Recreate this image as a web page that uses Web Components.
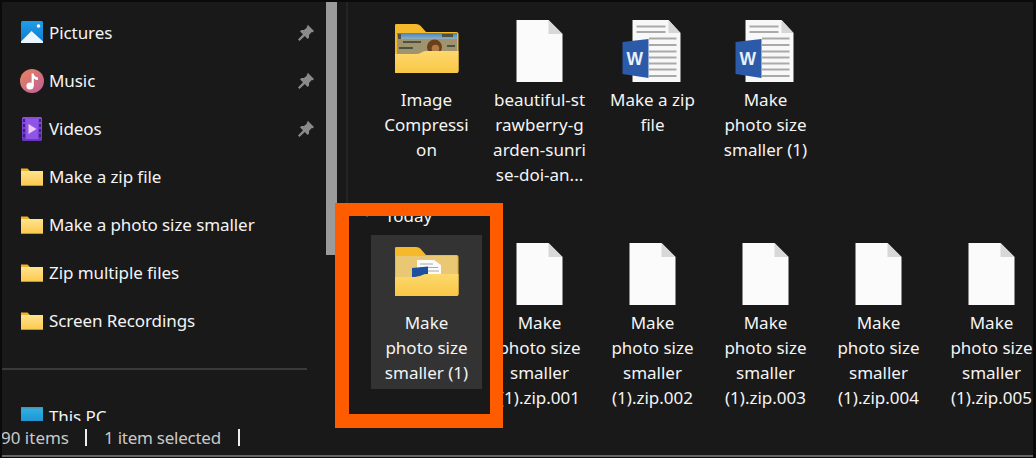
<!DOCTYPE html>
<html><head><meta charset="utf-8"><style>
html,body{margin:0;padding:0;background:#0a0a0a;overflow:hidden}
body{width:1036px;height:458px;font-family:"Noto Sans","Open Sans",sans-serif}
</style></head><body>
<fe-window>
  <nav-row slot="nav" icon="pictures" pinned>Pictures</nav-row>
  <nav-row slot="nav" icon="music" pinned>Music</nav-row>
  <nav-row slot="nav" icon="videos" pinned>Videos</nav-row>
  <nav-row slot="nav" icon="folder">Make a zip file</nav-row>
  <nav-row slot="nav" icon="folder">Make a photo size smaller</nav-row>
  <nav-row slot="nav" icon="folder">Zip multiple files</nav-row>
  <nav-row slot="nav" icon="folder">Screen Recordings</nav-row>
  <nav-sep slot="nav"></nav-sep>
  <nav-row slot="nav" icon="pc">This PC</nav-row>

  <tile-grid slot="main" tall>
    <file-tile icon="lion">Image<br>Compressi<br>on</file-tile>
    <file-tile icon="blank">beautiful-st<br>rawberry-g<br>arden-sunri<br>se-doi-an...</file-tile>
    <file-tile icon="word">Make a zip<br>file</file-tile>
    <file-tile icon="word">Make<br>photo size<br>smaller (1)</file-tile>
  </tile-grid>
  <group-head slot="main">Today</group-head>
  <tile-grid slot="main">
    <file-tile icon="docs" selected>Make<br>photo size<br>smaller (1)</file-tile>
    <file-tile icon="blank">Make<br>photo size<br>smaller<br>(1).zip.001</file-tile>
    <file-tile icon="blank">Make<br>photo size<br>smaller<br>(1).zip.002</file-tile>
    <file-tile icon="blank">Make<br>photo size<br>smaller<br>(1).zip.003</file-tile>
    <file-tile icon="blank">Make<br>photo size<br>smaller<br>(1).zip.004</file-tile>
    <file-tile icon="blank">Make<br>photo size<br>smaller<br>(1).zip.005</file-tile>
  </tile-grid>

  <status-part slot="status" wide>90 items</status-part>
  <status-part slot="status">1 item selected</status-part>
</fe-window>
<script>
const grad=(id,a,b)=>`<linearGradient id="${id}" x1="0" y1="0" x2="0" y2="1"><stop offset="0" stop-color="${a}"/><stop offset="1" stop-color="${b}"/></linearGradient>`;
const backFolder=`<path d="M1.500 4H21Q24 4 25.500 5.800L31 12H61.500Q63.500 12 63.500 14V51Q63.500 53 61.500 53H1.500Q-0.500 53 -0.500 51V6Q-0.500 4 1.500 4Z" fill="#f6b92b"/>`;
const frontFolder=`<path d="M-0.500 34H21Q24 34 26.500 32.400Q29 31 32 31H63.500V51Q63.500 53 61.500 53H1.500Q-0.500 53 -0.500 51Z" fill="url(#f)"/>`;
const ICONS={
 pictures:`<svg width="24" height="24" viewBox="0 0 24 24"><defs>${grad('a','#1f9fe8','#0f78cf')}</defs><rect x="1" y="0" width="22" height="22" rx="1.500" fill="url(#a)"/><circle cx="18.500" cy="5" r="1.800" fill="#fff"/><path d="M1 20.500 11.500 10 23 20.500V22H1Z" fill="#eaf6ff"/></svg>`,
 music:`<svg width="24" height="24" viewBox="0 0 24 24"><defs><linearGradient id="m" x1="0" y1="0" x2="1" y2="1"><stop offset="0" stop-color="#e8845a"/><stop offset="1" stop-color="#bf5f9c"/></linearGradient></defs><circle cx="12" cy="12" r="12" fill="url(#m)"/><circle cx="10" cy="17" r="3.600" fill="#fff"/><path d="M11.600 17V4.500H13.600Q14 8 18 8.600V11Q15.500 11 13.800 9.500V17Z" fill="#fff"/></svg>`,
 videos:`<svg width="24" height="24" viewBox="0 0 24 24"><defs>${grad('v','#8d4fe0','#6a35c2')}</defs><rect x="2" y="0" width="20" height="24" rx="1.500" fill="url(#v)"/><g fill="#3f1f86"><rect x="3" y="2" width="2" height="3"/><rect x="3" y="7" width="2" height="3"/><rect x="3" y="12" width="2" height="3"/><rect x="3" y="17" width="2" height="3"/><rect x="19" y="2" width="2" height="3"/><rect x="19" y="7" width="2" height="3"/><rect x="19" y="12" width="2" height="3"/><rect x="19" y="17" width="2" height="3"/></g><rect x="6" y="2" width="12" height="20" fill="#8f55e6"/><path d="M8.500 7 16.500 12 8.500 17Z" fill="#f0c8f5"/></svg>`,
 folder:`<svg width="24" height="24" viewBox="0 0 24 24"><defs>${grad('n','#ffe48e','#fbc94f')}</defs><path d="M1 3.500H7.500L10 6H23V20.500H1Z" fill="#f2b32a"/><path d="M1 6H23V20.500H1Z" fill="url(#n)"/></svg>`,
 pc:`<svg width="24" height="24" viewBox="0 0 24 24"><defs>${grad('p','#31b4e4','#1c8ed0')}</defs><rect x="1" y="2" width="22" height="17" rx="1" fill="url(#p)"/><rect x="1" y="2" width="22" height="1.500" fill="#5a8fa8"/></svg>`,
 blank:`<svg width="64" height="62" viewBox="0 0 64 62"><path d="M8.500 0H40.500L54.500 14V62H8.500Z" fill="#fbfbfb"/><path d="M40.500 0 54.500 14H40.500Z" fill="#d8d8d8"/></svg>`,
 word:`<svg width="64" height="62" viewBox="0 0 64 62"><path d="M11.500 0H47.500L59.500 13V62H11.500Z" fill="#f8f8f8"/><path d="M47.500 0 59.500 13H47.500Z" fill="#d6d6d6"/><g fill="#a9a9a9"><rect x="15.500" y="5.500" width="29" height="2"/><rect x="15.500" y="11" width="29" height="2"/><rect x="28" y="17.500" width="27.500" height="2"/><rect x="28" y="24" width="27.500" height="2"/><rect x="28" y="30.500" width="27.500" height="2"/><rect x="28" y="36.500" width="27.500" height="2"/><rect x="28" y="42.500" width="27.500" height="2"/><rect x="28" y="48.500" width="27.500" height="2"/><rect x="28" y="55" width="27.500" height="2"/></g><path d="M1.500 22 27.500 19V58L1.500 54Z" fill="#2a5aa8"/><text x="13.800" y="45" text-anchor="middle" font-family="Liberation Sans" font-weight="700" font-size="17.500" fill="#e9f0fa">W</text></svg>`,
 lion:`<svg width="64" height="62" viewBox="0 0 64 62"><defs>${grad('f','#fdd86d','#f9c746')}<linearGradient id="s" x1="0" y1="0" x2="0" y2="1"><stop offset="0" stop-color="#3f86c6"/><stop offset="1" stop-color="#9fb6bd"/></linearGradient></defs>${backFolder}<rect x="2" y="13" width="60" height="7" fill="url(#s)"/><rect x="2" y="19" width="60" height="16" fill="#a0946e"/><path d="M3 14h3v5H3zM47 14h11v3H47zM8 21h18v2H8zM4 27h14v2H4zM52 25h8v2H52z" fill="#4b5240"/><circle cx="39.500" cy="27" r="7.500" fill="#6a3f1c"/><circle cx="40.500" cy="28.500" r="3.800" fill="#b07a40"/>${frontFolder}</svg>`,
 docs:`<svg width="64" height="62" viewBox="0 0 64 62"><defs>${grad('f','#fdd86d','#f9c746')}</defs>${backFolder}<rect x="1" y="13" width="61" height="22" fill="#eac873"/><path d="M22 17H39L46 22V33H22Z" fill="#fbfbfb"/><path d="M25 21H38M25 24.500H43M27 28H44" stroke="#a8a8a8"/><path d="M17 25 33 23.500V31.500L17 34.500Z" fill="#1f4f9f"/>${frontFolder}</svg>`
};
function def(name,css,html){
  customElements.define(name,class extends HTMLElement{
    constructor(){super();const r=this.attachShadow({mode:'open'});r.innerHTML=`<style>${css}</style>${html(this)}`;}
  });
}
def('fe-window',`
 :host{display:flex;flex-direction:column;position:relative;width:1031px;height:455px;margin:2px 0 0 2px;background:#191919;color:#f4f4f4;box-sizing:border-box;overflow:hidden;border-bottom:2px solid #666}
 .panes{flex:1;min-height:0;display:flex;overflow:hidden}
 nav{width:324px;flex:none;padding-top:7px;box-sizing:border-box;overflow:hidden}
 .track{width:11px;flex:none}
 .thumb{height:253px;background:#9b9b9b}
 .gap{width:9px;flex:none}
 .split{width:2px;flex:none;background:#242424}
 main{flex:1;min-width:0;overflow:hidden;padding:10px 0 0 23px;box-sizing:border-box}
 footer{height:34px;flex:none;display:flex;align-items:center;margin-left:-1px;padding-bottom:2px;box-sizing:border-box}
 .mark{position:absolute;left:333px;top:201px;width:168px;height:225px;box-sizing:border-box;border:solid #ff5c00;border-width:13px 13px 14px 14px}
`,()=>`<div class="panes"><nav><slot name="nav"></slot></nav><div class="track"><div class="thumb"></div></div><div class="gap"></div><div class="split"></div><main><slot name="main"></slot></main></div><footer><slot name="status"></slot></footer><div class="mark"></div>`);
def('nav-row',`
 :host{display:flex;align-items:center;height:48px;padding-left:18px;font-size:17px;letter-spacing:-.08px;color:#f4f4f4;white-space:nowrap}
 .i{width:24px;height:24px;flex:none;display:block}
 svg{display:block}
 .t{margin-left:5px;flex:1;padding-bottom:2px}
 .pin{margin-right:12px;display:block}
`,el=>`<span class="i">${ICONS[el.getAttribute('icon')]}</span><span class="t"><slot></slot></span>${el.hasAttribute('pinned')?`<svg class="pin" width="16" height="16" viewBox="0 0 16 16"><path d="M10 0 16 6 14.800 7.200 13.800 6.900 11 10 11 12.800 9.600 14 6.800 11 1.500 16 0 14.500 5 9.200 2 6.400 3.300 5 6 5 9.200 2.200 8.900 1.200Z" fill="#8a8a8a"/></svg>`:''}`);
def('nav-sep',`:host{display:flex;align-items:center;height:48px}div{width:305px;height:2px;background:#3a3a3a}`,()=>`<div></div>`);
def('tile-grid',`:host{display:grid;grid-template-columns:repeat(6,111px);column-gap:2px;align-items:start}:host([tall]){height:179px}`,()=>`<slot></slot>`);
def('file-tile',`
 :host{display:block;width:111px;box-sizing:border-box;padding:8px 0 4px;text-align:center;font-size:17px;line-height:25px;color:#f4f4f4;white-space:nowrap}
 :host([selected]){background:#333;height:154px}
 .i{display:flex;justify-content:center;height:62px;margin-bottom:5px}
 .t{display:flex;justify-content:center}
`,el=>`<div class="i">${ICONS[el.getAttribute('icon')]}</div><div class="t"><div><slot></slot></div></div>`);
def('group-head',`
 :host{display:flex;align-items:center;height:44px;padding:4px 0 0;margin-left:-9px;box-sizing:border-box;font-size:17px;color:#f4f4f4;gap:13px}
 svg{display:block;margin-top:-3px}
`,()=>`<svg width="10" height="6" viewBox="0 0 10 6"><path d="M1 1 5 5 9 1" fill="none" stroke="#ccc" stroke-width="1.200"/></svg><span><slot></slot></span>`);
def('status-part',`
 :host{display:flex;align-items:center;font-size:17px;letter-spacing:-.25px;color:#c9c9c9;white-space:nowrap}
 :host([wide]){letter-spacing:0}
 i{display:block;width:2px;height:17px;background:#ededed;margin:0 17px 0 17px}
 :host([wide]) i{margin-left:16px}
`,()=>`<span><slot></slot></span><i></i>`);
</script>
</body></html>
